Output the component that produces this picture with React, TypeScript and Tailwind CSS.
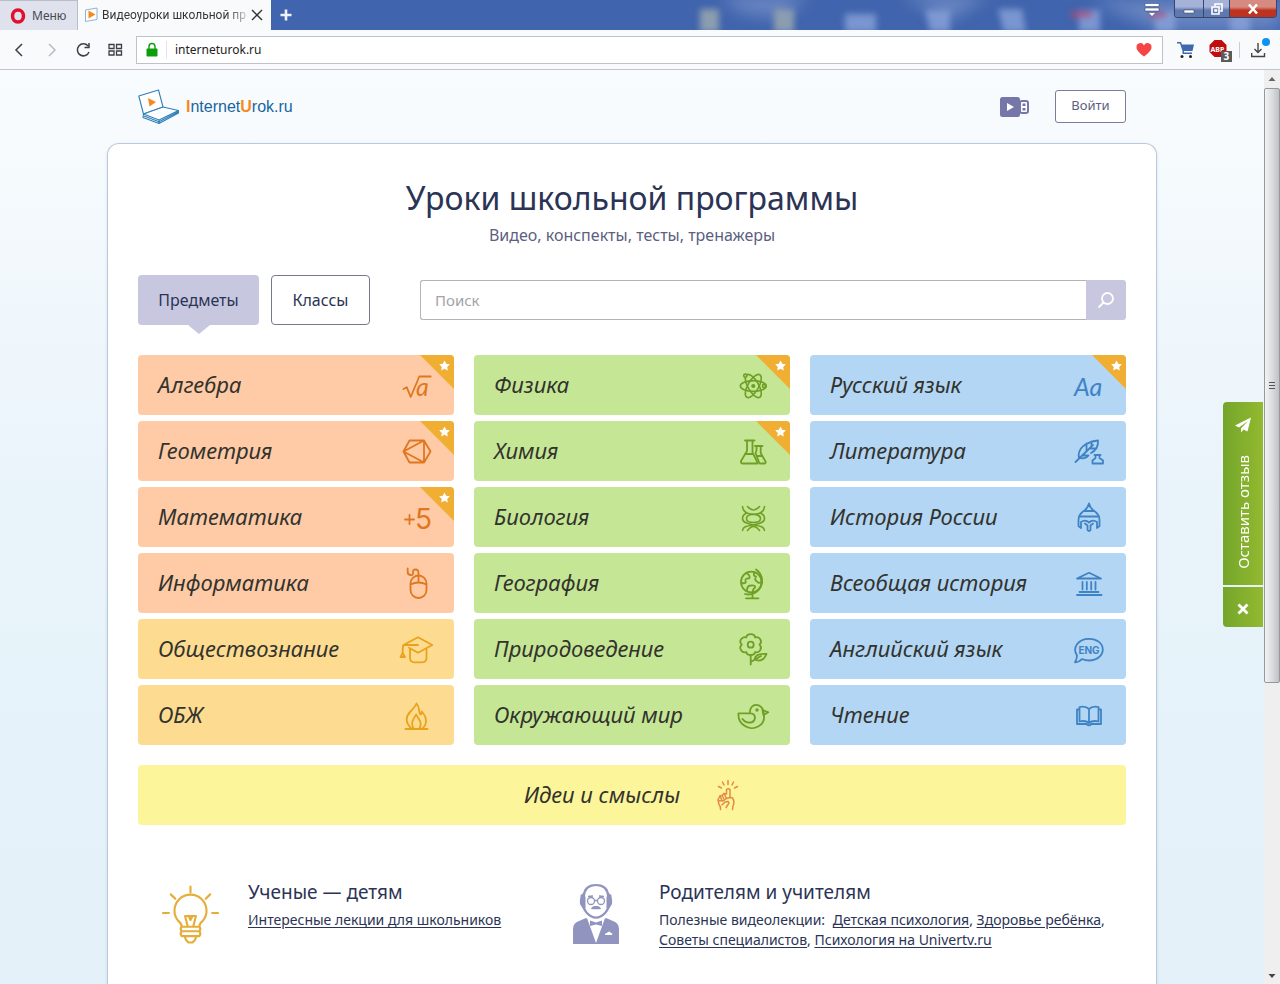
import type { ReactNode } from 'react';
import clsx from 'clsx';

interface Subject {
  name: string;
  icon: ReactNode;
  starred?: boolean;
  tone?: string;
}

interface SubjectCardProps {
  subject: Subject;
  tone: string;
}

interface IconProps {
  children: ReactNode;
}

const ORANGE = 'bg-[#fecba6] text-[#e0771f]';
const AMBER = 'bg-[#fddc91] text-[#e9a21b]';
const GREEN = 'bg-[#c5e795] text-[#6f9f25]';
const BLUE = 'bg-[#b2d6f4] text-[#3f83c5]';

const Icon = ({ children }: IconProps) => (
  <svg
    viewBox="0 0 32 32"
    className="size-8 shrink-0 overflow-visible"
    fill="none"
    stroke="currentColor"
    strokeWidth="1.8"
    strokeLinecap="round"
    strokeLinejoin="round"
    aria-hidden="true"
  >
    {children}
  </svg>
);

const algebraIcon = (
  <Icon>
    <path d="M2.5 20 5.7 18.2 9.7 28 18.3 7.5H29.7" />
    <text x="15" y="27" fontSize="25" fontStyle="italic" fontFamily="Lato, sans-serif" fill="currentColor" stroke="none">
      a
    </text>
  </Icon>
);

const geometryIcon = (
  <Icon>
    <path d="M2.5 16.5 8.5 5.5H23L29.5 16.5 23 27.5H8.5ZM2.5 16.5 23 5.5V27.5Z" />
  </Icon>
);

const mathIcon = (
  <Icon>
    <path d="M4 18.5h9M8.500 14v9" />
    <text x="14" y="28" fontSize="28" fontWeight="400" fontFamily="Inter, sans-serif" fill="currentColor" stroke="none">
      5
    </text>
  </Icon>
);

const mouseIcon = (
  <Icon>
    <path d="M9.5 16.5a8 8 0 0 1 16 0v6.5a8 8 0 0 1-16 0ZM9.5 17.5q8-4 16 0" />
    <path d="M17.5 14.5V6q0-3.500-3-3.500T12 5.500 9.500 8 6.700 5V1.500" />
  </Icon>
);

const capIcon = (
  <Icon>
    <path d="M2.500 12 17 4.300 31.300 12 17 19.700 8 14.800M17 12H2.500Q1.500 14 1.700 20M1.700 20-.500 24H4Z" />
    <path d="M9 16.500v8q0 4.800 4.500 4.800h7.500q4.500 0 4.500-4.800v-8" />
  </Icon>
);

const fireIcon = (
  <Icon>
    <path d="M4.500 30H26.500M10.500 29.500C3.500 23 5 17 9.500 12.500 13.500 8.500 14.500 7 15.500 4.500 19.500 9 17 12 19.300 15.500Q21 15 20.700 12.500C26 18 26.500 25 21.500 29.500" />
    <path d="M12.500 29.500C9 24 12.500 20 15.200 15.500 17 20 22 23 18.500 29.500" />
  </Icon>
);

const atomIcon = (
  <Icon>
    <g strokeWidth="1.6">
      <ellipse cx="16.300" cy="17" rx="13" ry="5.400" />
      <ellipse cx="16.300" cy="17" rx="13" ry="5.400" transform="rotate(60 16.300 17)" />
      <ellipse cx="16.300" cy="17" rx="13" ry="5.400" transform="rotate(120 16.300 17)" />
      <circle cx="16.300" cy="17" r="1.300" fill="currentColor" />
      <circle cx="8.300" cy="6.700" r="1.600" fill="#c5e795" />
      <circle cx="27" cy="17" r="1.600" fill="#c5e795" />
    </g>
  </Icon>
);

const flaskIcon = (
  <Icon>
    <path d="M8 5.500H17.500M10 5.500V16L4 26Q3.500 28.500 5.500 28.500H20.500Q20.500 27 19.500 25.500L15.500 17.500V5.500M8 19H16" />
    <path d="M18 11H25.500M19.500 11V15.500L18.500 18 22.500 28.500H28Q29 28 28.500 26.500L23.700 18V11M20 21H25" />
  </Icon>
);

const dnaIcon = (
  <Icon>
    <g strokeWidth="1.6">
      <path d="M5.500 5.500C6 10 9 12.500 14 13 19 13.500 23.500 14 23.500 17.500S20 21.500 16.500 21.500 9.500 21 9.500 17.500 13 13.500 19 13C24 12.500 27 10 27.500 5.500" />
      <path d="M10.500 5.500q6 7 12 0M10.500 29.500q6-8 12 0" />
      <path d="M9 12.500Q5.500 14 5.500 17.500C5.500 22 12 23 17 24 24 25 27 26 27.500 29.500M24 12.500Q27.500 14 27.500 17.500C27.500 22 21 23 16 24 9 25 6 26 5.500 29.500" />
    </g>
  </Icon>
);

const globeIcon = (
  <Icon>
    <circle cx="14.300" cy="15" r="10.300" />
    <path d="M19 2.500A13.600 13.600 0 0 1 8 27M15.500 28.500V31.300M9 31.300H21.500" />
    <path d="M10 6.500Q14 9 12 11.500 8 11 8.500 14 10 17 4.500 16M17.500 5.500Q15.500 9 19 9.500 17 13 20 14.500 22 17 24 15M10 23.500Q10 18.500 14 18.500 19 18 18 20.500 16 22 15.500 25" />
  </Icon>
);

const flowerIcon = (
  <Icon>
    <path d="M9.200 4.500C10 0 17.400 0 18.200 4.500 22.500 3 26 8.500 22.500 11.700 26 15 22.500 20.500 18.200 19 17.400 23 10 23 9.200 19 5 20.500 1.200 15 4.800 11.700 1.200 8.500 5 3 9.200 4.500Z" />
    <circle cx="13.700" cy="11.700" r="3" />
    <path d="M13.700 22V31.500M13.700 29 24 23M17.500 26.500Q18.500 20 29.500 21 26 30 17.500 26.500Z" />
  </Icon>
);

const birdIcon = (
  <Icon>
    <path d="M13 14.300C12 3 26 3.500 26.500 13.500 30 28 15 32 8 27 3 24 1 19.500 1.500 14.300H13.500Q18 14.500 18 19 17 24 12 23.500 8 23.500 5.500 20" />
    <path d="M25.500 11 31.300 13.300 26.500 16Z" />
    <circle cx="20" cy="11" r=".8" fill="currentColor" />
  </Icon>
);

const lettersIcon = (
  <Icon>
    <text x="1" y="27" fontSize="25" fontStyle="italic" fontFamily="Lato, sans-serif" fill="currentColor" stroke="none">
      Aa
    </text>
  </Icon>
);

const featherIcon = (
  <Icon>
    <path d="M2.500 27 20 10M6 23C4 14 12 7 25 5.500 25.500 13 22 16 18 18M6 23Q12 24.500 15.500 20.500M13.500 16.500V8.500M9.500 20.500H15M17 13.500H23.500M18.500 11.500V6.500" />
    <path d="M21.500 20H27.500M22.500 20V23L19.500 25.500V28.500H30V25.500L26.500 23V20" />
  </Icon>
);

const helmetIcon = (
  <Icon>
    <path d="M16 2.500Q17 7.500 22 10.500 26.500 14 26.500 19V25L24 27V21Q19.500 18 16 21.500 12.500 18 8 21V27L5.500 25V19Q5.500 14 10 10.500 15 7.500 16 2.500Z" />
    <path d="M11 10H21M6.500 15.500H25.500M12 22.500 14.500 24.500V29Q16 31 17.500 29V24.500L20 22.500" />
  </Icon>
);

const templeIcon = (
  <Icon>
    <path d="M4 11.500 16 5.800 28 11.500ZM9.500 15V22.500M13.800 15V22.500M18.200 15V22.500M22.500 15V22.500M6.500 25H25.500M4 28H28.500" />
  </Icon>
);

const englishIcon = (
  <Icon>
    <path d="M4 22.500C-1 15 5 5.800 16 5.800 24 5.800 29.800 10.500 29.800 16.500S24 27.500 16 27.500Q12 27.500 9 26 6.500 29 2 29.300 4 26 4 22.500Z" />
    <text x="16" y="20.500" textAnchor="middle" fontSize="10" fontWeight="700" fontFamily="Inter, sans-serif" fill="currentColor" stroke="none">
      ENG
    </text>
  </Icon>
);

const bookIcon = (
  <Icon>
    <path d="M16 10Q12.500 6.500 6.500 8V22.500Q12.500 21 16 24 19.500 21 25.500 22.500V8Q19.500 6.500 16 10ZM16 10V24M6.500 10.500H4V25H13.500Q16 27.500 18.500 25H28V10.500H25.500" />
  </Icon>
);

const columns: { tone: string; subjects: Subject[] }[] = [
  {
    tone: ORANGE,
    subjects: [
      { name: 'Алгебра', icon: algebraIcon, starred: true },
      { name: 'Геометрия', icon: geometryIcon, starred: true },
      { name: 'Математика', icon: mathIcon, starred: true },
      { name: 'Информатика', icon: mouseIcon },
      { name: 'Обществознание', icon: capIcon, tone: AMBER },
      { name: 'ОБЖ', icon: fireIcon, tone: AMBER },
    ],
  },
  {
    tone: GREEN,
    subjects: [
      { name: 'Физика', icon: atomIcon, starred: true },
      { name: 'Химия', icon: flaskIcon, starred: true },
      { name: 'Биология', icon: dnaIcon },
      { name: 'География', icon: globeIcon },
      { name: 'Природоведение', icon: flowerIcon },
      { name: 'Окружающий мир', icon: birdIcon },
    ],
  },
  {
    tone: BLUE,
    subjects: [
      { name: 'Русский язык', icon: lettersIcon, starred: true },
      { name: 'Литература', icon: featherIcon },
      { name: 'История России', icon: helmetIcon },
      { name: 'Всеобщая история', icon: templeIcon },
      { name: 'Английский язык', icon: englishIcon },
      { name: 'Чтение', icon: bookIcon },
    ],
  },
];

const SubjectCard = ({ subject, tone }: SubjectCardProps) => (
  <a
    href="#"
    className={clsx('relative flex h-15 items-center justify-between overflow-hidden rounded pr-[21px] pl-5', subject.tone ?? tone)}
  >
    <span className="pb-0.5 text-[22px] leading-7 text-[#33332e] italic">{subject.name}</span>
    {subject.icon}
    {subject.starred && (
      <svg viewBox="0 0 34 34" className="absolute top-0 right-0 size-[34px]" aria-hidden="true">
        <path d="M0 0H34V34Z" fill="#f0ae32" />
        <path
          d="M24.500 5.500 26.200 8.800 29.800 9.300 27.200 11.900 27.800 15.500 24.500 13.800 21.200 15.500 21.800 11.900 19.200 9.300 22.800 8.800Z"
          fill="#fff"
        />
      </svg>
    )}
  </a>
);

const PlayBookIcon = ({ className }: { className: string }) => (
  <svg viewBox="0 0 16 16" className={className} fill="none" aria-hidden="true">
    <path d="M1.500 3 13 1V12.500L1.500 14.500Z" fill="#fff" stroke="#8fb4d4" />
    <path d="M4.500 3.500 11.500 7.500 4.500 11.500Z" fill="#f58a1f" />
  </svg>
);

const TitleBar = () => (
  <div className="relative flex h-[30px] items-stretch overflow-hidden bg-[#4064ad]">
    <svg className="absolute inset-0 h-full w-full" preserveAspectRatio="xMaxYMin slice" viewBox="0 0 1280 30" aria-hidden="true">
      <defs>
        <filter id="soft" x="-10%" y="-50%" width="120%" height="200%">
          <feGaussianBlur stdDeviation="3" />
        </filter>
        <filter id="haze" x="-20%" y="-100%" width="140%" height="300%">
          <feGaussianBlur stdDeviation="8" />
        </filter>
      </defs>
      <path d="M720-5H810L780 18 740 12ZM900-5H990L950 20ZM1090 0H1280V30H1160Z" fill="#7c94cb" opacity=".7" filter="url(#haze)" />
      <g filter="url(#soft)">
        <path d="M700 9H719V32H700ZM774 9H794V32H774Z" fill="#8b9db0" />
        <path d="M845 14H876V32H845ZM925 10H950V32H930ZM998 9H1022L1026 32H1004ZM1079 10H1100V32H1079ZM1155 12H1175V32H1155ZM1230 14H1250V32H1230Z" fill="#8aa2da" opacity=".8" />
        <path d="M1071 11H1092V18H1071ZM1150 12H1166V18H1150Z" fill="#a94b7b" opacity=".8" />
      </g>
    </svg>
    <button className="relative flex w-[78px] items-center gap-1.5 border-t border-r border-[#b9bdc9] bg-[#dfe2ec] pl-2.5 text-xs text-[#444a57]">
      <svg viewBox="0 0 16 16" className="size-4" aria-hidden="true">
        <ellipse cx="8" cy="8" rx="5.500" ry="6" fill="none" stroke="#e2102f" strokeWidth="3.500" />
      </svg>
      Меню
    </button>
    <div className="relative flex w-[193px] items-center gap-0.5 bg-[#f8fafc] pr-2 pl-1.5">
      <PlayBookIcon className="size-4 shrink-0" />
      <span className="flex-1 bg-linear-to-r from-[#333] from-85% to-[#dfe2e6] bg-clip-text font-[Roboto,sans-serif] text-xs whitespace-nowrap text-transparent">
        Видеоуроки школьной пр
      </span>
      <button aria-label="Закрыть вкладку">
        <svg viewBox="1 1 12 12" className="size-3" stroke="#333" strokeWidth="1.400" aria-hidden="true">
          <path d="M2 2 12 12M12 2 2 12" />
        </svg>
      </button>
    </div>
    <button className="relative px-2" aria-label="Новая вкладка">
      <svg viewBox="0 0 14 14" className="size-3.5" stroke="#eef3fb" strokeWidth="2.600" aria-hidden="true">
        <path d="M7 1.500V12.500M1.500 7H12.500" />
      </svg>
    </button>
    <div className="relative ml-auto flex items-start gap-3.5 pr-[3px]">
      <button className="pt-[3px]" aria-label="Меню вкладок">
        <svg viewBox="0 0 16 14" className="h-3.5 w-4" fill="#fff" stroke="#35507f" strokeWidth=".6" aria-hidden="true">
          <path d="M1 .500H15V3.500H1ZM1 5H15V8H1ZM4 9.500H12L8 13.500Z" />
        </svg>
      </button>
      <div className="flex h-[18px] overflow-hidden rounded-b border border-t-0 border-[#34466e]">
        <button className="flex w-[28px] items-center justify-center bg-linear-to-b from-[#a3b2d6] from-40% to-[#5f78ae] to-60%" aria-label="Свернуть">
          <svg viewBox="0 0 12 12" className="size-3" aria-hidden="true">
            <path d="M1 7H11V10H1Z" fill="#fff" stroke="#3b4a6b" strokeWidth=".6" />
          </svg>
        </button>
        <button className="flex w-[27px] items-center justify-center border-x border-[#34466e] bg-linear-to-b from-[#a3b2d6] from-40% to-[#5f78ae] to-60%" aria-label="Развернуть">
          <svg viewBox="0 0 12 12" className="size-3" fill="none" stroke="#fff" strokeWidth="1.600" aria-hidden="true">
            <path d="M4 3V1H11V8H9M1 4H8V11H1ZM4 7H5.500V8H4Z" />
          </svg>
        </button>
        <button className="flex w-[46px] items-center justify-center bg-linear-to-b from-[#d68a80] from-40% to-[#bd3320] to-60%" aria-label="Закрыть">
          <svg viewBox="0 0 12 12" className="size-3" stroke="#fff" strokeWidth="2.600" aria-hidden="true">
            <path d="M2 1.500 10 10.500M10 1.500 2 10.500" />
          </svg>
        </button>
      </div>
    </div>
  </div>
);

const AddressBar = () => (
  <div className="flex h-10 items-center border-b border-[#c3c5cb] bg-[#f8fafc] pr-3.5 pl-3">
    <div className="flex w-[124px] gap-4 text-[#3c3f45]">
      <button aria-label="Назад">
        <svg viewBox="0 0 16 16" className="size-4" fill="none" stroke="currentColor" strokeWidth="1.500" aria-hidden="true">
          <path d="M10 2 4 8 10 14" />
        </svg>
      </button>
      <button className="text-[#b9bcc2]" aria-label="Вперёд">
        <svg viewBox="0 0 16 16" className="size-4" fill="none" stroke="currentColor" strokeWidth="1.500" aria-hidden="true">
          <path d="M5 2 11 8 5 14" />
        </svg>
      </button>
      <button aria-label="Обновить">
        <svg viewBox="0 0 16 16" className="size-4" fill="none" stroke="currentColor" strokeWidth="1.500" aria-hidden="true">
          <path d="M12 4A6 6 0 1 0 13 10M13 1V5.500H8.500" />
        </svg>
      </button>
      <button aria-label="Экспресс-панель">
        <svg viewBox="0 0 16 16" className="size-4" fill="none" stroke="currentColor" strokeWidth="1.300" aria-hidden="true">
          <path d="M1 2.500H6V6.500H1ZM8.500 2.500H13.500V6.500H8.500ZM1 9H6V13H1ZM8.500 9H13.500V13H8.500Z" />
        </svg>
      </button>
    </div>
    <label className="flex h-7 flex-1 items-center border border-[#bfc2c8] bg-white pr-2.5 pl-2">
      <svg viewBox="0 0 14 16" className="h-4 w-3.5" aria-hidden="true">
        <path d="M4 7V4.500A3 3 0 0 1 10 4.500V7" fill="none" stroke="#0a9f0a" strokeWidth="1.400" />
        <rect x="1.500" y="6.500" width="11" height="8" rx="1" fill="#0a9f0a" />
      </svg>
      <span className="mr-2 ml-[7px] h-4.5 w-px bg-[#e3e5e8]" />
      <input className="min-w-0 flex-1 text-xs text-[#222] outline-none" defaultValue="interneturok.ru" aria-label="Адрес" />
      <svg viewBox="0 0 16 16" className="size-4" aria-hidden="true">
        <path d="M8 14.500C2 10 .500 7.500.500 5.200A3.900 3.900 0 0 1 8 3.500 3.900 3.900 0 0 1 15.500 5.200C15.500 7.500 14 10 8 14.500Z" fill="#f54545" />
      </svg>
    </label>
    <div className="flex items-center">
      <button className="ml-3.5" aria-label="Корзина">
        <svg viewBox="0 0 18 18" className="size-[18px]" fill="#3f68ae" aria-hidden="true">
          <path d="M0 1H4L5 3.500H17L15.500 10H7V11.500H15V13H5.500V10L3 2.500H0Z" />
          <circle cx="5" cy="15.500" r="1.500" fill="#222" />
          <circle cx="13.500" cy="15.500" r="1.500" fill="#222" />
        </svg>
      </button>
      <button className="ml-3.5" aria-label="Блокировщик рекламы">
        <svg viewBox="0 0 24 24" className="size-6" aria-hidden="true">
          <path d="M5.500 2H12.500L17.500 7V14L12.500 19H5.500L.500 14V7Z" fill="#c00c0c" />
          <text x="1.500" y="13.500" fontSize="7" fontWeight="700" fill="#fff">
            ABP
          </text>
          <rect x="12" y="13" width="11" height="11" fill="#5b5b5b" />
          <text x="14.500" y="22" fontSize="10" fontWeight="700" fill="#fff">
            3
          </text>
        </svg>
      </button>
      <span className="mr-2.5 ml-1.5 h-4 w-px bg-[#c9ccd2]" />
      <button aria-label="Загрузки" className="relative">
        <svg viewBox="0 0 16 16" className="size-4" fill="none" stroke="#444" strokeWidth="1.400" aria-hidden="true">
          <path d="M8 1V10.500M4.500 7 8 10.500 11.500 7M1.700 11V14.500H14.500V11" />
        </svg>
        <span className="absolute -top-1 -right-1 size-2 rounded-full bg-[#0f93f2]" />
      </button>
    </div>
  </div>
);

const SiteHeader = () => (
  <header className="flex h-[73px] items-center justify-between px-[31px]">
    <a href="#" className="flex items-center gap-1.5">
      <svg viewBox="0 0 42 36" className="h-9 w-[42px]" fill="#fff" stroke="#2f7fb8" strokeWidth="1.100" strokeLinejoin="round" aria-hidden="true">
        <path d="M.800 7 20.500 1 25 18 5.500 25Z" />
        <path d="M5.500 25 25 18 40.500 21.500 21 31ZM5.500 25 5 28.500 21 34.500 40.500 24V21.500M21 31V34.500M6 27 21 32.800 40 23" />
        <path d="M10 9 18 13 11.500 17.500Z" fill="#f58a1f" stroke="none" />
      </svg>
      <span className="font-[Liberation_Sans,sans-serif] text-base text-[#1766a0]">
        <b className="text-[#f58a1f]">I</b>nternet<b className="text-[#f58a1f]">U</b>rok.ru
      </span>
    </a>
    <div className="flex items-center gap-[25px]">
      <svg viewBox="0 0 30 20" className="h-5 w-[30px]" aria-hidden="true">
        <rect width="20" height="20" rx="2.500" fill="#7577a9" />
        <path d="M7 6 14 10 7 14Z" fill="#fff" />
        <rect x="20" y="4" width="8" height="12" rx="2" fill="#fff" stroke="#7577a9" strokeWidth="2" />
        <path d="M22.500 6.500H25.500V9H22.500ZM22.500 11H25.500V13.500H22.500Z" fill="#7577a9" />
      </svg>
      <button className="h-[33px] w-[71px] rounded-[3px] border border-[#7a7c9c] bg-white pb-0.5 text-[13px] text-[#5c5f80]">Войти</button>
    </div>
  </header>
);

const SubjectTabs = () => (
  <div className="flex gap-3 text-base text-[#2b3455]">
    <button className="relative h-[50px] w-[121px] rounded bg-[#c7c8e0]">
      Предметы
      <svg viewBox="0 0 22 9" className="absolute top-full left-1/2 h-[9px] w-[22px] -translate-x-1/2" aria-hidden="true">
        <path d="M0 0H22L11 9Z" fill="#c7c8e0" />
      </svg>
    </button>
    <button className="h-[50px] w-[99px] rounded border border-[#76788f] bg-white">Классы</button>
  </div>
);

const SearchForm = () => (
  <form className="flex h-10 flex-1">
    <input
      type="search"
      placeholder="Поиск"
      aria-label="Поиск"
      className="min-w-0 flex-1 rounded-l-[3px] border border-r-0 border-[#b3b4ba] px-3.5 text-[15px] outline-none placeholder:text-[#a3a3a8]"
    />
    <button type="button" className="flex w-10 items-center justify-center rounded-r-[3px] bg-[#c7c8e0]" aria-label="Найти">
      <svg viewBox="0 0 18 18" className="size-[18px]" fill="none" stroke="#fff" strokeWidth="1.800" aria-hidden="true">
        <circle cx="10.500" cy="7.500" r="5.500" />
        <path d="M6.500 11.500 1.500 16.500" />
      </svg>
    </button>
  </form>
);

const IdeaBanner = () => (
  <a href="#" className="mt-5 flex h-15 items-center justify-center gap-9 rounded bg-[#fdf59a]">
    <span className="pb-0.5 text-[22px] leading-7 text-[#33332e] italic">Идеи и смыслы</span>
    <svg viewBox="2 0 24 32" className="h-8 w-6" fill="none" stroke="#e38a45" strokeWidth="1.500" strokeLinecap="round" strokeLinejoin="round" aria-hidden="true">
      <path d="M14 1.500V5.500M8.500 3 10 6M19.500 3 18 6M4.500 7.500 7.500 9M23.500 7.500 20.500 9" />
      <path d="M6.500 30.500Q7 28 5 25.500L4 20.500 6 17 8 16.500 10 14.500 12.500 15V10.500Q14.200 9 16 10.500V18.500L18.500 19Q21 23 19 27L18.500 30.500" />
      <path d="M6 17 8 21.500M8 16.500 10.500 21M10 14.500 12.500 19.500M4.500 21.500 9 22 12.500 19.500 16 18.500M8 26 11 23 14 22.500 15 24 12 28.500" />
    </svg>
  </a>
);

const Resources = () => (
  <div className="mt-[53px] grid grid-cols-[411px_1fr] text-[#2b3455]">
    <section className="flex gap-[29px] pl-6">
      <svg viewBox="0 0 58 60" className="mt-[7px] h-15 w-[57px] shrink-0" fill="none" stroke="#e6ae39" strokeWidth="2.200" strokeLinecap="round" strokeLinejoin="round" aria-hidden="true">
        <path d="M29 1V7M9 9 13.500 13.500M49 9 44.500 13.500M1 28H7M51 28H57" />
        <path d="M20 42Q20 38.500 16.500 36A16.300 16.300 0 1 1 41.500 36Q38 38.500 38 42ZM20 42H38Q40 44 38 46.500H20Q18 44 20 42ZM20 46.500H38Q40 49 38 51.500H20Q18 49 20 46.500ZM23 51.500 24.500 55.500 27 58H31L33.500 55.500 35 51.500" />
        <path d="M26 41 23.500 31H34.500L32 41M27 31 29 35 31 31" />
      </svg>
      <div>
        <h2 className="text-[19px] leading-7">Ученые — детям</h2>
        <p className="mt-1 text-sm leading-5">
          <a href="#" className="underline underline-offset-2">Интересные лекции для школьников</a>
        </p>
      </div>
    </section>
    <section className="flex gap-10 pl-6">
      <svg viewBox="0 0 46 60" className="mt-1.5 h-15 w-[46px] shrink-0" fill="#9094bf" aria-hidden="true">
        <path d="M0 60V45Q0 39 6 37L13 34 23 40 33 34 40 37Q46 39 46 45V60Z" />
        <path d="M14 34 23 59 32 34 23 38Z" fill="#fff" />
        <path d="M17 36.500 23 38.500 29 36.500V42L23 40.500 17 42Z" />
        <path d="M10 9Q12 0 23 0T36 9Q40 14 39 20L36 25Q34 30 28 33.500 23 36 18 33.500 12 30 10 25L7 20Q6 14 10 9Z" />
        <path d="M12 12Q13 2 23 2T34 12V23Q33 28 27 31.500 23 33.500 19 31.500 13 28 12 23Z" fill="#fff" />
        <path d="M7.500 11Q12 8 12.500 14V24L8 21ZM38.500 11Q34 8 33.500 14V24L38 21Z" />
        <g fill="none" stroke="#9094bf" strokeWidth="1.300">
          <circle cx="18" cy="17" r="3.500" />
          <circle cx="28" cy="17" r="3.500" />
          <path d="M21.500 16.500H24.500M15 12.500 20 12M26 12 31 12.500" />
        </g>
        <path d="M18 25Q19 21.500 23 22 27 21.500 28 25 23 25.500 18 25Z" />
        <path d="M32 51Q32 48.500 34 49 36 46 38 49 40 49 39 51Z" fill="#fff" />
      </svg>
      <div>
        <h2 className="text-[19px] leading-7">Родителям и учителям</h2>
        <p className="mt-1 text-sm leading-5">
          Полезные видеолекции:{' '}
          <a href="#" className="ml-1 underline underline-offset-2">Детская психология</a>,{' '}
          <a href="#" className="underline underline-offset-2">Здоровье ребёнка</a>,<br />
          <a href="#" className="underline underline-offset-2">Советы специалистов</a>,{' '}
          <a href="#" className="underline underline-offset-2">Психология на Univertv.ru</a>
        </p>
      </div>
    </section>
  </div>
);

const FeedbackWidget = () => (
  <div className="absolute top-[332px] right-px flex w-10 flex-col gap-0.5 text-white">
    <button className="flex h-[183px] flex-col items-center justify-between rounded-tl bg-linear-to-r from-[#74a62b] to-[#93b92f] pt-3.5 pb-4">
      <svg viewBox="0 0 18 18" className="size-[18px]" fill="#fff" aria-hidden="true">
        <path d="M17 1.500 1 9.500 5 11.500 14 5 7 12.500V16.500L9.500 13.500 13.500 15.500Z" />
      </svg>
      <span className="rotate-180 text-[15px] leading-6 [writing-mode:vertical-rl]">Оставить отзыв</span>
    </button>
    <button className="flex h-10 items-center justify-center rounded-bl bg-linear-to-r from-[#74a62b] to-[#93b92f] pt-1" aria-label="Скрыть">
      <svg viewBox="0 0 12 12" className="size-3" stroke="#fff" strokeWidth="2.800" aria-hidden="true">
        <path d="M1.500 1.500 10.500 10.500M10.500 1.500 1.500 10.500" />
      </svg>
    </button>
  </div>
);

const ScrollBar = () => (
  <div className="flex w-4 shrink-0 flex-col bg-[#efeff0]" aria-hidden="true">
    <svg viewBox="0 0 16 18" className="h-[18px] w-4">
      <path d="M4.500 11 8 7 11.500 11Z" fill="#666" />
    </svg>
    <div className="flex h-[595px] items-center justify-center rounded-xs border border-[#96989c] bg-linear-to-r from-[#f3f3f4] via-[#dcdde0] to-[#bfc1c6]">
      <svg viewBox="0 0 8 8" className="size-2" stroke="#555">
        <path d="M1 .500H7M1 3.500H7M1 6.500H7" />
      </svg>
    </div>
    <svg viewBox="0 0 16 18" className="mt-auto h-[18px] w-4">
      <path d="M4.500 8 8 12 11.500 8Z" fill="#444" />
    </svg>
  </div>
);

const App = () => {
  return (
    <div className="flex h-screen flex-col overflow-hidden font-['Noto_Sans','Open_Sans',sans-serif]">
      <TitleBar />
      <AddressBar />
      <div className="relative flex min-h-0 flex-1">
        <div className="relative flex min-w-0 flex-1 flex-col overflow-hidden bg-linear-to-b from-[#f9fcfe] via-[#e8f3fa] to-[#e4f1f8]">
          <div className="mx-auto flex w-full max-w-[1050px] flex-1 flex-col">
            <SiteHeader />
            <main className="flex-1 rounded-t-xl border border-b-0 border-[#b9cade] bg-white px-[30px] pt-8 shadow-sm">
              <h1 className="text-center text-[32px] leading-11 text-[#2b3455]">Уроки школьной программы</h1>
              <p className="mt-[3px] text-center text-base leading-6 text-[#5c5f80]">Видео, конспекты, тесты, тренажеры</p>
              <div className="mt-7 flex items-center gap-[50px]">
                <SubjectTabs />
                <SearchForm />
              </div>
              <div className="mt-[30px] grid grid-cols-3 gap-5">
                {columns.map(({ tone, subjects }) => (
                  <div key={tone} className="flex flex-col gap-1.5">
                    {subjects.map((subject) => (
                      <SubjectCard key={subject.name} subject={subject} tone={tone} />
                    ))}
                  </div>
                ))}
              </div>
              <IdeaBanner />
              <Resources />
            </main>
          </div>
          <FeedbackWidget />
        </div>
        <ScrollBar />
      </div>
    </div>
  );
};

export default App;
